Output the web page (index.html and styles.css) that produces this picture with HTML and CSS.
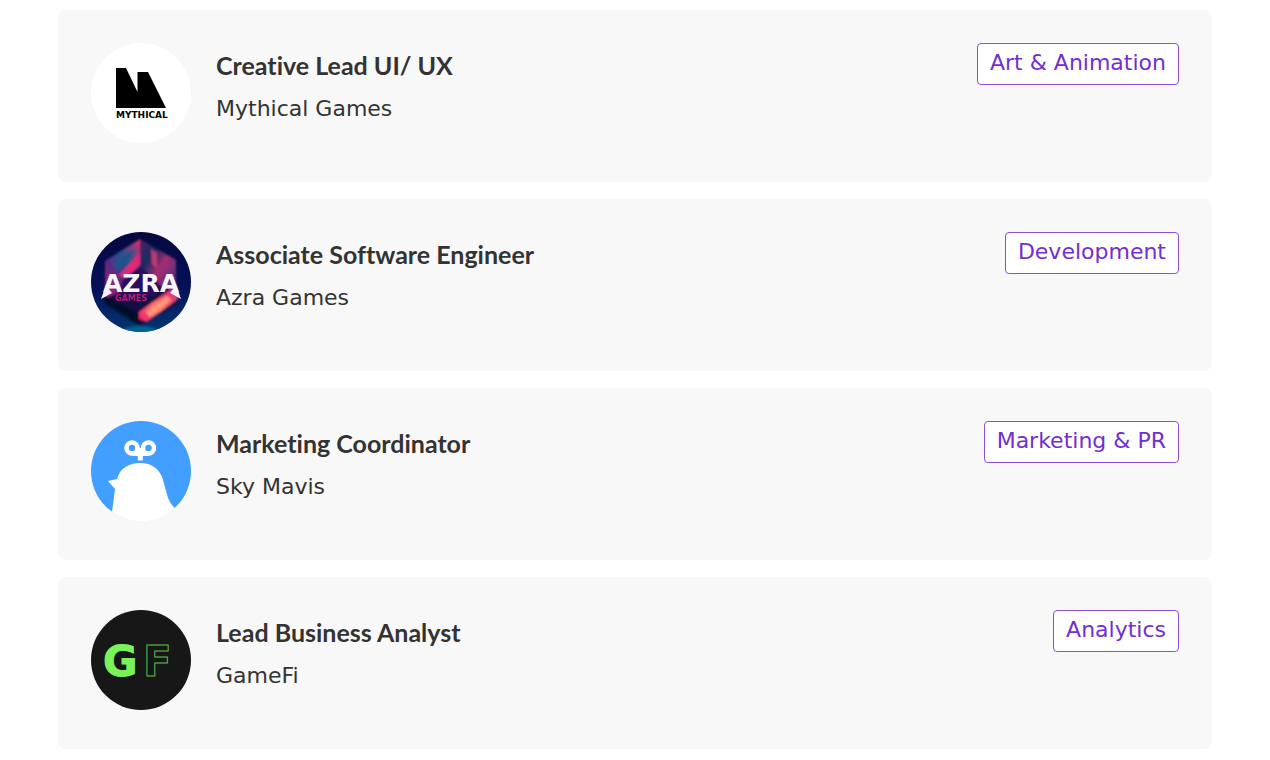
FILE: index.html
```html
<!DOCTYPE html>
<html lang="en">
<head>
<meta charset="utf-8">
<meta name="viewport" content="width=device-width, initial-scale=1">
<title>Jobs</title>
<link rel="stylesheet" href="styles.css">
</head>
<body>
<main class="jobs">
  <article class="job">
    <svg class="logo" viewBox="0 0 100 100" role="img" aria-label="Mythical logo">
      <circle cx="50" cy="50" r="50" fill="#fff"/>
      <path d="M25 25H35L46.500 49V29H57L75 65H25Z" fill="#000"/>
      <text class="logo-mythical" x="25" y="75">MYTHICAL</text>
    </svg>
    <div class="info">
      <h2 class="title">Creative Lead UI/ UX</h2>
      <p class="company">Mythical Games</p>
    </div>
    <span class="tag">Art &amp; Animation</span>
  </article>

  <article class="job">
    <svg class="logo" viewBox="0 0 100 100" role="img" aria-label="Azra Games logo">
      <defs>
        <clipPath id="disc"><circle cx="50" cy="50" r="50"/></clipPath>
        <linearGradient id="night" x1="0" y1="0" x2="0" y2="1"><stop offset="0" stop-color="#06083f"/><stop offset=".55" stop-color="#041058"/><stop offset="1" stop-color="#02366f"/></linearGradient>
        <linearGradient id="left" x1="0" y1="1" x2="1" y2="0"><stop offset="0" stop-color="#c21c6b"/><stop offset=".35" stop-color="#5b2a86"/><stop offset=".6" stop-color="#1e5590"/><stop offset="1" stop-color="#e32870"/></linearGradient>
        <linearGradient id="right" x1="0" y1="0" x2="1" y2="1"><stop offset="0" stop-color="#54205f"/><stop offset=".3" stop-color="#162b61"/><stop offset=".55" stop-color="#a52d70"/><stop offset="1" stop-color="#352d86"/></linearGradient>
        <linearGradient id="beam" x1="0" y1="1" x2="1" y2="0"><stop offset="0" stop-color="#ed1767"/><stop offset=".45" stop-color="#ff756c"/><stop offset="1" stop-color="#d51b70"/></linearGradient>
        <filter id="soft" x="-20%" y="-20%" width="140%" height="140%"><feGaussianBlur stdDeviation="1"/></filter>
      </defs>
      <g clip-path="url(#disc)">
        <rect width="100" height="100" fill="url(#night)"/>
        <g filter="url(#soft)">
          <path d="M49 7L14 29V66L49 94L85 72V28Z" fill="#120b42"/>
          <path d="M49 7L14 29V66L27 61L49 36Z" fill="url(#left)"/>
          <path d="M49 7L85 28V60L70 54L49 38Z" fill="url(#right)"/>
          <path d="M27 44L49 21V32L36 46Z" fill="#e52674"/>
          <path d="M22 32L46 15L38 29L26 38Z" fill="#1f558a"/>
          <path d="M60 17L66 21V37L61 32Z" fill="#ba3b71"/>
          <path d="M31 49L49 34L66 49V64H28Z" fill="#2c0a5b"/>
          <path d="M14 64L49 82V94L14 71Z" fill="#060829"/>
          <path d="M48 80L80 57L88 60L87 67L56 90L48 87Z" fill="url(#beam)"/>
          <path d="M55 80L76 64L80 68L59 85Z" fill="#ff9678"/>
          <ellipse cx="49" cy="98" rx="16" ry="4" fill="#066294"/>
        </g>
        <path d="M10 67L15 53L21 61ZM90 67L85 53L79 61Z" fill="#f5f2fa"/>
        <text class="logo-azra" x="50" y="60">AZRA</text>
        <text class="logo-azra-sub" x="24" y="69">GAMES</text>
      </g>
    </svg>
    <div class="info">
      <h2 class="title">Associate Software Engineer</h2>
      <p class="company">Azra Games</p>
    </div>
    <span class="tag">Development</span>
  </article>

  <article class="job">
    <svg class="logo" viewBox="0 0 100 100" role="img" aria-label="Sky Mavis logo">
      <circle cx="50" cy="50" r="50" fill="#429eff"/>
      <g fill="none" stroke="#fff" stroke-width="4.500">
        <circle cx="41" cy="27" r="5.500"/>
        <circle cx="57.500" cy="27" r="5.500"/>
        <path d="M41 32.500H57.500M49.300 27V39.500" stroke-width="5"/>
      </g>
      <path d="M21 91L24 68L17 60L26 58C29 47 38 42 49 42C61 42 69 48 72 59L77 77Q80 84 84 87A50 50 0 0 1 50 100.500A50 50 0 0 1 21 91Z" fill="#fff"/>
    </svg>
    <div class="info">
      <h2 class="title">Marketing Coordinator</h2>
      <p class="company">Sky Mavis</p>
    </div>
    <span class="tag">Marketing &amp; PR</span>
  </article>

  <article class="job">
    <svg class="logo" viewBox="0 0 100 100" role="img" aria-label="GameFi logo">
      <circle cx="50" cy="50" r="50" fill="#171717"/>
      <text class="logo-gf" x="12" y="66">G</text>
      <text class="logo-gf logo-gf-outline" x="52" y="66">F</text>
    </svg>
    <div class="info">
      <h2 class="title">Lead Business Analyst</h2>
      <p class="company">GameFi</p>
    </div>
    <span class="tag">Analytics</span>
  </article>
</main>
</body>
</html>
```
FILE: styles.css
```css
* { box-sizing: border-box; }

body {
  margin: 0;
  background: #fff;
  color: #333;
  font-family: "DejaVu Sans", sans-serif;
}

.jobs {
  display: flex;
  flex-direction: column;
  gap: 17px;
  padding: 10px 58px;
}

.job {
  display: flex;
  align-items: flex-start;
  gap: 25px;
  padding: 33px 33px 39px;
  border-radius: 8px;
  background: #f8f8f8;
}

.logo {
  flex: none;
  width: 100px;
  height: 100px;
}

.info {
  flex: 1;
  padding-top: 6px;
}

.title {
  margin: 0;
  font: 700 25px/32px Lato, sans-serif;
  font-variant-ligatures: none;
}

.company {
  margin: 12px 0 0;
  font-size: 22px;
  line-height: 32px;
}

.tag {
  padding: 4px 12px 6px;
  border: 1px solid #8c4fdc;
  border-radius: 4px;
  background: #fff;
  color: #722ed1;
  font-size: 22px;
  line-height: 30px;
  white-space: nowrap;
}

.logo-mythical {
  font: 700 9px "DejaVu Sans", sans-serif;
}

.logo-azra {
  fill: #f8f5fc;
  font: 700 25px "DejaVu Sans", sans-serif;
  text-anchor: middle;
}

.logo-azra-sub {
  fill: #b41d78;
  font: 700 8px "DejaVu Sans", sans-serif;
}

.logo-gf {
  fill: #7af35b;
  stroke: #7af35b;
  font: 700 42px "DejaVu Sans", sans-serif;
}

.logo-gf-outline {
  fill: none;
  stroke: #5fbb47;
}
```
